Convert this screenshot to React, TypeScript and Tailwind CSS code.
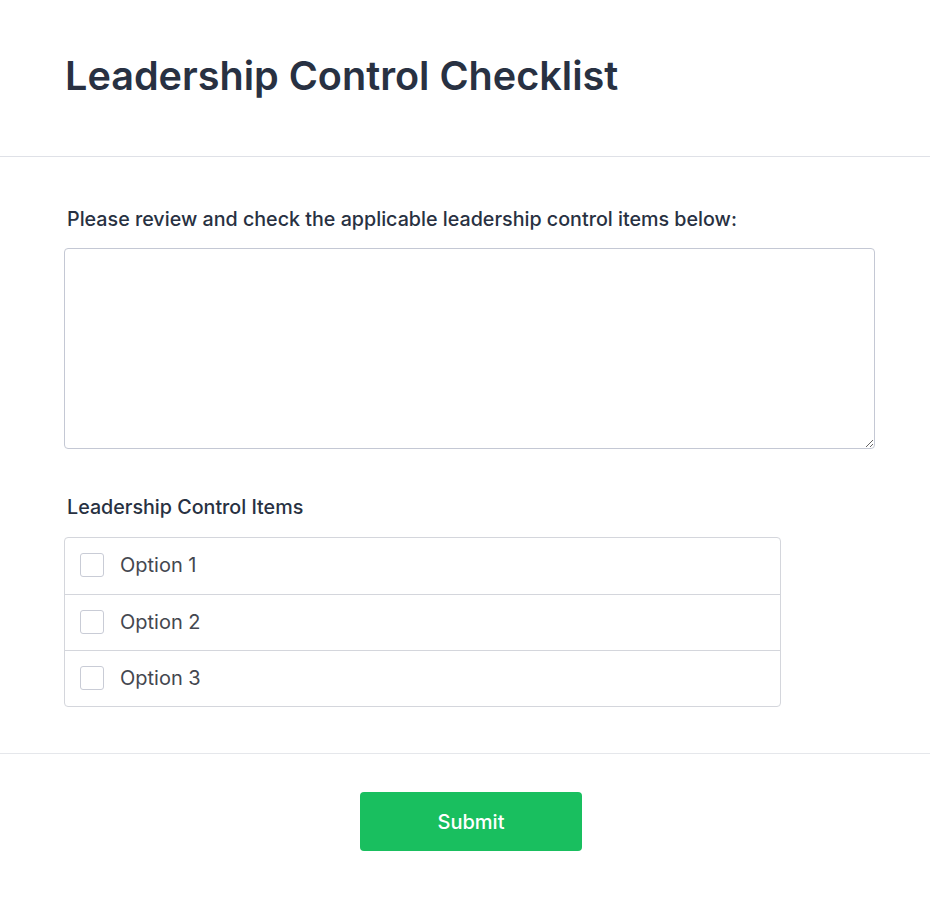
import { useState } from 'react';

const options = ['Option 1', 'Option 2', 'Option 3'];

export default function App() {
  const [checked, setChecked] = useState<boolean[]>([false, false, false]);

  const toggle = (i: number) => {
    setChecked((prev) => prev.map((v, j) => (j === i ? !v : v)));
  };

  return (
    <div className="min-h-screen bg-white font-['Inter',sans-serif]">
      <div className="h-[157px] border-b border-[#dfe1e7] pl-[65px] pt-[52px]">
        <h1 className="text-[39.6px] font-semibold leading-[48px] text-[#283142]">
          Leadership Control Checklist
        </h1>
      </div>

      <div className="border-b border-[#e5e7eb] pl-[64px] pt-[48px] pb-[46px]">
        <label className="block pl-[3px] text-[19.7px] font-medium leading-[28px] text-[#283142]">
          Please review and check the applicable leadership control items below:
        </label>
        <textarea className="mt-[15px] block h-[201px] w-[811px] rounded-[4px] border border-[#c4c8d4] p-3 outline-none" />

        <div className="mt-[44px] pl-[3px] text-[19.7px] font-medium leading-[28px] text-[#283142]">
          Leadership Control Items
        </div>
        <div className="mt-[16px] w-[717px] rounded-[4px] border border-[#d4d6dc]">
          {options.map((o, i) => (
            <label
              key={o}
              className={`flex h-[56px] cursor-pointer items-center gap-[16px] px-[15px] pb-[2px] ${
                i > 0 ? 'border-t border-[#d4d6dc]' : ''
              }`}
            >
              <input
                type="checkbox"
                checked={checked[i]}
                onChange={() => toggle(i)}
                className="h-[24px] w-[24px] appearance-none rounded-[3px] border border-[#c9ccd6] bg-white checked:bg-[#19bf5f]"
              />
              <span className="text-[20px] leading-[28px] text-[#44474f]">{o}</span>
            </label>
          ))}
        </div>
      </div>

      <div className="flex w-[942px] justify-center pt-[38px]">
        <button className="h-[59px] w-[222px] rounded-[4px] bg-[#19bf5f] text-[20px] font-medium text-white">
          Submit
        </button>
      </div>
    </div>
  );
}
